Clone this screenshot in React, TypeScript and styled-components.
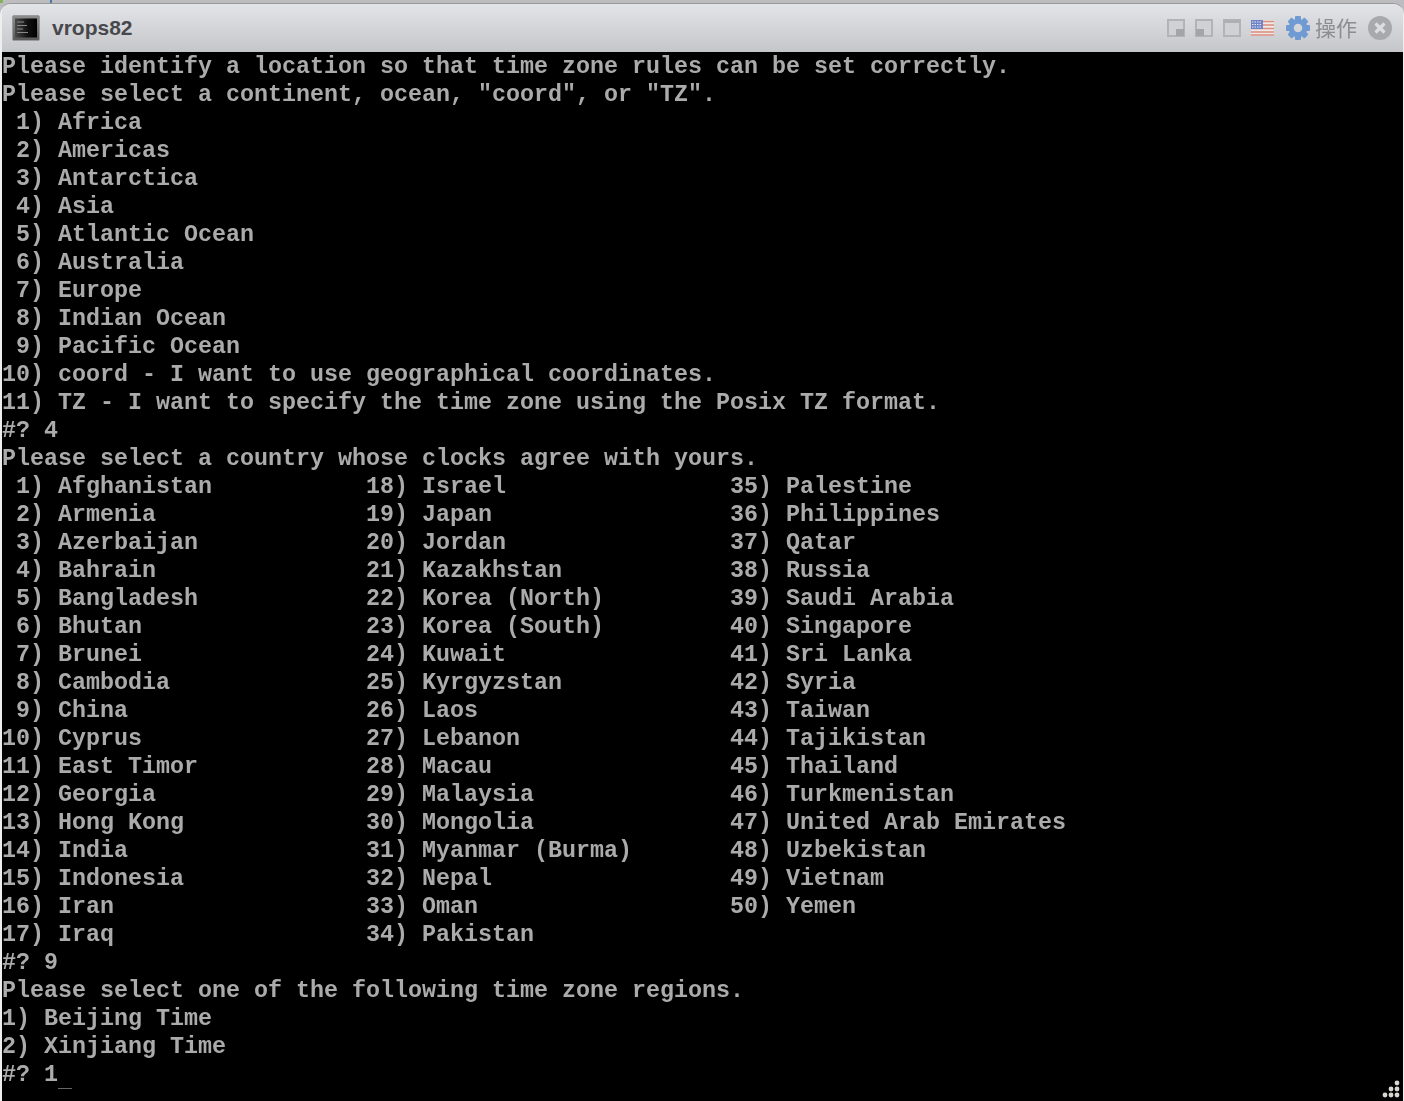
import React from 'react'
import styled, { createGlobalStyle } from 'styled-components'

const GlobalStyle = createGlobalStyle`
  html, body {
    margin: 0;
    padding: 0;
    background: #c6c6c8;
  }
`

const Desktop = styled.div`
  position: relative;
  width: 1404px;
  height: 1101px;
  padding-top: 3px;
  box-sizing: border-box;
  overflow: hidden;
  background: #bdbdbf;
`

const Mark = styled.div<{ $left: number; $width: number; $color: string }>`
  position: absolute;
  top: 0;
  left: ${p => p.$left}px;
  width: ${p => p.$width}px;
  height: 3px;
  background: ${p => p.$color};
`

const Win = styled.div`
  height: 1098px;
  display: flex;
  flex-direction: column;
  border-radius: 11px 11px 0 0;
  border-top: 1px solid #97989a;
  box-sizing: border-box;
  overflow: hidden;
  background: #eeeeee;
  padding-left: 2px;
  padding-right: 1px;
`

const TitleBar = styled.div`
  height: 48px;
  flex: none;
  display: flex;
  align-items: center;
  padding: 0 11px 0 10px;
  background: linear-gradient(#e3e4e7, #c5c6ca);
`

const Title = styled.div`
  margin-left: 12px;
  font: bold 21px 'Liberation Sans', Arial, sans-serif;
  color: #46484c;
  flex: 1;
`

const Tools = styled.div`
  display: flex;
  align-items: center;
  filter: blur(0.4px);
`

const WinBtn = styled.svg`
  width: 18px;
  height: 18px;
  margin-right: 10px;
`

const ActionLabel = styled.span`
  margin: 0 11px 3px 5px;
  font: 21px 'Noto Sans CJK SC', sans-serif;
  color: #8c8d90;
`

const Screen = styled.div`
  position: relative;
  flex: 1;
  background: #000;
`

const Console = styled.pre`
  margin: 0;
  padding-top: 1px;
  font-family: 'Liberation Mono', monospace;
  font-size: 23.33px;
  font-weight: bold;
  line-height: 28px;
  color: #ababab;
  filter: blur(0.45px);
`

const Cursor = styled.div`
  position: absolute;
  left: 56px;
  top: 1036px;
  width: 14px;
  height: 1px;
  background: #666;
`

const Grip = styled.svg`
  position: absolute;
  right: 2px;
  bottom: 2px;
  width: 20px;
  height: 20px;
`

const row = (a: string, b: string, c = '') => a.padEnd(26) + b.padEnd(26) + c

const lines = [
  'Please identify a location so that time zone rules can be set correctly.',
  'Please select a continent, ocean, "coord", or "TZ".',
  ' 1) Africa',
  ' 2) Americas',
  ' 3) Antarctica',
  ' 4) Asia',
  ' 5) Atlantic Ocean',
  ' 6) Australia',
  ' 7) Europe',
  ' 8) Indian Ocean',
  ' 9) Pacific Ocean',
  '10) coord - I want to use geographical coordinates.',
  '11) TZ - I want to specify the time zone using the Posix TZ format.',
  '#? 4',
  'Please select a country whose clocks agree with yours.',
  row(' 1) Afghanistan', '18) Israel', '35) Palestine'),
  row(' 2) Armenia', '19) Japan', '36) Philippines'),
  row(' 3) Azerbaijan', '20) Jordan', '37) Qatar'),
  row(' 4) Bahrain', '21) Kazakhstan', '38) Russia'),
  row(' 5) Bangladesh', '22) Korea (North)', '39) Saudi Arabia'),
  row(' 6) Bhutan', '23) Korea (South)', '40) Singapore'),
  row(' 7) Brunei', '24) Kuwait', '41) Sri Lanka'),
  row(' 8) Cambodia', '25) Kyrgyzstan', '42) Syria'),
  row(' 9) China', '26) Laos', '43) Taiwan'),
  row('10) Cyprus', '27) Lebanon', '44) Tajikistan'),
  row('11) East Timor', '28) Macau', '45) Thailand'),
  row('12) Georgia', '29) Malaysia', '46) Turkmenistan'),
  row('13) Hong Kong', '30) Mongolia', '47) United Arab Emirates'),
  row('14) India', '31) Myanmar (Burma)', '48) Uzbekistan'),
  row('15) Indonesia', '32) Nepal', '49) Vietnam'),
  row('16) Iran', '33) Oman', '50) Yemen'),
  row('17) Iraq', '34) Pakistan'),
  '#? 9',
  'Please select one of the following time zone regions.',
  '1) Beijing Time',
  '2) Xinjiang Time',
  '#? 1',
]

function ConsoleIcon() {
  return (
    <svg width="28" height="26" viewBox="0 0 28 26">
      <defs>
        <linearGradient id="frame" x1="0" y1="0" x2="0" y2="1">
          <stop offset="0" stopColor="#8e8e8e" />
          <stop offset="1" stopColor="#5a5a5a" />
        </linearGradient>
        <linearGradient id="glass" x1="0" y1="0" x2="1" y2="0">
          <stop offset="0" stopColor="#4a4a4a" />
          <stop offset="0.55" stopColor="#121212" />
          <stop offset="1" stopColor="#000" />
        </linearGradient>
      </defs>
      <rect x="0.5" y="0.5" width="27" height="25" rx="1.5" fill="url(#frame)" stroke="#9a9a9a" />
      <rect x="3" y="3.5" width="22" height="19" fill="url(#glass)" />
      <path d="M5 7h7M5 10.500h10M5 14h6M5 17.500h11" stroke="#8a8a8a" strokeWidth="1.200" />
    </svg>
  )
}

function Flag() {
  return (
    <svg width="23" height="16" viewBox="0 0 23 16" style={{ marginRight: 12 }}>
      <rect width="23" height="16" fill="#efe9e6" />
      <path d="M0 1.500h23M0 5h23M0 8.500h23M0 12h23M0 15h23" stroke="#dc8b7e" strokeWidth="1.700" />
      <rect width="12" height="9" fill="#6d83c4" />
      <path d="M1 2h10M1 4.500h10M1 7h10" stroke="#e2e6f6" strokeWidth="1.200" strokeDasharray="1.500 1" />
    </svg>
  )
}

function Gear() {
  const teeth = [0, 45, 90, 135, 180, 225, 270, 315]
  return (
    <svg width="24" height="24" viewBox="0 0 24 24">
      {teeth.map(a => (
        <rect key={a} x="9" y="0" width="6" height="5" rx="1" fill="#6f9ad2" transform={`rotate(${a} 12 12)`} />
      ))}
      <circle cx="12" cy="12" r="6.800" fill="none" stroke="#6f9ad2" strokeWidth="5" />
    </svg>
  )
}

function CloseIcon() {
  return (
    <svg width="24" height="24" viewBox="0 0 24 24">
      <circle cx="12" cy="12" r="12" fill="#a8a9ac" />
      <path d="M7.500 7.500l9 9M16.500 7.500l-9 9" stroke="#dcdde0" strokeWidth="3.200" />
    </svg>
  )
}

export default function App() {
  return (
    <>
      <GlobalStyle />
      <Desktop>
        <Mark $left={0} $width={3} $color="#7fb45a" />
        <Mark $left={50} $width={2} $color="#4a78a8" />
        <Win>
          <TitleBar>
            <ConsoleIcon />
            <Title>vrops82</Title>
            <Tools>
              <WinBtn viewBox="0 0 18 18">
                <rect x="1" y="1" width="16" height="16" fill="#d0d1d4" stroke="#b2b3b6" strokeWidth="2" />
                <rect x="9" y="10" width="8" height="7" fill="#a4a5a8" />
              </WinBtn>
              <WinBtn viewBox="0 0 18 18">
                <rect x="1" y="1" width="16" height="16" fill="#d0d1d4" stroke="#b2b3b6" strokeWidth="2" />
                <rect x="1" y="10" width="8" height="7" fill="#a4a5a8" />
              </WinBtn>
              <WinBtn viewBox="0 0 18 18">
                <rect x="1" y="1" width="16" height="16" fill="#d0d1d4" stroke="#b2b3b6" strokeWidth="2" />
                <rect x="1" y="1" width="16" height="3" fill="#aeafb2" />
              </WinBtn>
              <Flag />
              <Gear />
              <ActionLabel>操作</ActionLabel>
              <CloseIcon />
            </Tools>
          </TitleBar>
          <Screen>
            <Console>{lines.join('\n')}</Console>
            <Cursor />
            <Grip viewBox="0 0 20 20">
              {[[16, 4], [10, 10], [16, 10], [4, 16], [10, 16], [16, 16]].map(([x, y]) => (
                <circle key={`${x}-${y}`} cx={x} cy={y} r="2.400" fill="#d8d8d0" />
              ))}
            </Grip>
          </Screen>
        </Win>
      </Desktop>
    </>
  )
}
